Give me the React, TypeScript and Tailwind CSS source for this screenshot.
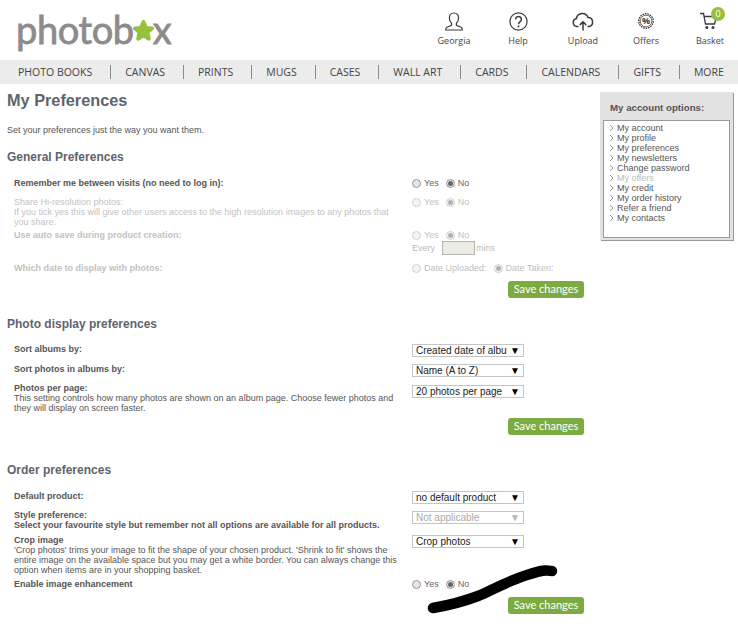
import type { ReactNode } from "react";

const navItems = ["PHOTO BOOKS", "CANVAS", "PRINTS", "MUGS", "CASES", "WALL ART", "CARDS", "CALENDARS", "GIFTS", "MORE"];
const accountLinks = ["My account", "My profile", "My preferences", "My newsletters", "Change password", "My offers", "My credit", "My order history", "Refer a friend", "My contacts"];

function Radio({ label, checked, muted }: { label: string; checked?: boolean; muted?: boolean }) {
  return (
    <span className={`flex items-center gap-[3px] ${muted ? "text-[#c0c0c0]" : "text-[#666666]"}`}>
      <span className={`flex h-[9px] w-[9px] items-center justify-center rounded-full border ${muted ? "border-[#d0d0d0] bg-[#f4f4f4]" : "border-[#999999] bg-[#e4e4e4]"}`}>
        {checked && <span className={`h-[5px] w-[5px] rounded-full ${muted ? "bg-[#b0b0b0]" : "bg-[#666666]"}`} />}
      </span>
      {label}
    </span>
  );
}

function Select({ value, disabled }: { value: string; disabled?: boolean }) {
  return (
    <div className={`flex h-[13px] w-[112px] items-center justify-between border border-[#c4c4c4] pl-[3px] pr-[3px] text-[10px] ${disabled ? "text-[#aaaaaa]" : "text-[#222222]"}`}>
      <span className="w-[91px] overflow-hidden whitespace-nowrap">{value}</span>
      <span className={`text-[10px] leading-none ${disabled ? "text-[#b5b5b5]" : "text-black"}`}>▼</span>
    </div>
  );
}

function Label({ children, muted }: { children: ReactNode; muted?: boolean }) {
  return <div className={`font-bold ${muted ? "text-[#c2c2c2]" : "text-[#555555]"}`}>{children}</div>;
}

function SaveButton({ className }: { className: string }) {
  return (
    <div className={`ml-[501px] flex h-[17px] w-[76px] items-center justify-center rounded-[3px] bg-[#7cab42] pb-px font-['Lato',sans-serif] text-[11px] text-white ${className}`}>
      Save changes
    </div>
  );
}

function Heading({ children, className }: { children: ReactNode; className: string }) {
  return <h2 className={`h-[14px] text-[12px] font-bold leading-[14px] text-[#5f646b] ${className}`}>{children}</h2>;
}

function HeaderLink({ label, className, children }: { label: string; className: string; children: ReactNode }) {
  return (
    <div className={`flex flex-col items-center ${className}`}>
      <div className="flex h-[20px] items-center text-[#3a3a3a]">{children}</div>
      <span className="mt-[4px] text-[9px] leading-[12px] text-[#444444]">{label}</span>
    </div>
  );
}

export default function App() {
  return (
    <div className="relative h-[627px] w-[738px] overflow-hidden bg-white font-['Liberation_Sans',Arial,sans-serif] text-[9px] leading-[10px]">
      <header className="flex h-[60px] font-['Open_Sans',sans-serif]">
        <div className="ml-[16px] mt-[4px] flex h-[50px] items-center font-['Lato',sans-serif] text-[38px] leading-none tracking-[-0.4px] text-[#8f8a8c] [-webkit-text-stroke:0.8px_#8f8a8c]">
          photob
          <svg viewBox="0 0 24 24" className="ml-[-2px] mr-[-2px] mt-[3px] h-[23px] w-[23px] shrink-0">
            <polygon points="12,3 14.6,9.2 21,9.8 16.2,14 17.6,20.6 12,17.2 6.4,20.6 7.8,14 3,9.8 9.4,9.2" fill="#96c03d" stroke="#96c03d" strokeWidth="4" strokeLinejoin="round" />
          </svg>
          x
        </div>
        <div className="ml-auto mt-[11px] flex">
          <HeaderLink label="Georgia" className="w-[64px]">
            <svg viewBox="0 0 18 19" className="h-[19px] w-[18px]" fill="none" stroke="currentColor" strokeWidth="1.2">
              <path d="M9 1C6 1 4.4 3.2 4.4 6c0 2.3 1 4.2 2.2 5.3v2.1L1.8 15.3C1 15.7.7 16.3.7 18h16.6c0-1.7-.3-2.3-1.1-2.7l-4.8-1.9v-2.1C12.6 10.2 13.6 8.3 13.6 6 13.6 3.2 12 1 9 1z" />
            </svg>
          </HeaderLink>
          <HeaderLink label="Help" className="w-[64px]">
            <svg viewBox="0 0 19 19" className="h-[19px] w-[19px]" fill="none" stroke="currentColor" strokeWidth="1.2">
              <circle cx="9.5" cy="9.5" r="8.6" />
              <path d="M6.6 7.4a2.9 2.9 0 1 1 4.6 2.3c-1.1.8-1.7 1.3-1.7 2.6" strokeWidth="1.5" />
              <circle cx="9.5" cy="14.6" r="1" fill="currentColor" stroke="none" />
            </svg>
          </HeaderLink>
          <HeaderLink label="Upload" className="w-[66px]">
            <svg viewBox="0 0 22 19" className="h-[19px] w-[22px]" fill="none" stroke="currentColor" strokeWidth="1.5" strokeLinecap="round" strokeLinejoin="round">
              <path d="M6 14.5H5a4 4 0 0 1-.6-7.9A6 6 0 0 1 16 5.6a4.5 4.5 0 0 1 1 8.9h-1" />
              <path d="M11 18v-8M8.2 12.6 11 9.8l2.8 2.8" />
            </svg>
          </HeaderLink>
          <HeaderLink label="Offers" className="w-[60px]">
            <svg viewBox="0 0 16 16" className="h-[16px] w-[16px]" fill="none" stroke="currentColor">
              <circle cx="8" cy="8" r="7.2" strokeWidth="1.4" strokeDasharray="1.6 0.9" />
              <circle cx="8" cy="8" r="5.8" strokeWidth="0.7" />
              <text x="8" y="11" textAnchor="middle" fontSize="9" fontWeight="700" fill="currentColor" stroke="none">%</text>
            </svg>
          </HeaderLink>
          <HeaderLink label="Basket" className="relative ml-[6px] w-[56px]">
            <svg viewBox="0 0 18 18" className="ml-[-2px] h-[18px] w-[18px]" fill="none" stroke="currentColor" strokeWidth="1.3">
              <path d="M0 1.5h3.5L5.5 12h9l2-7.5H4.2" />
              <circle cx="6.8" cy="15.5" r="1.5" fill="currentColor" stroke="none" />
              <circle cx="13" cy="15.5" r="1.5" fill="currentColor" stroke="none" />
            </svg>
            <span className="absolute left-[29px] top-[-4px] flex h-[14px] w-[14px] items-center justify-center rounded-full bg-[#96c03d] text-[9px] text-white">0</span>
          </HeaderLink>
        </div>
      </header>

      <nav className="flex h-[24px] items-center bg-[#ececec] pl-[18px] font-['Open_Sans',sans-serif] text-[10.5px] text-[#444444]">
        {navItems.map((item, i) => (
          <div key={item} className="flex items-center whitespace-nowrap">
            {i > 0 && <span className="ml-[18px] mr-[14px] h-[14px] w-px bg-[#8d8d85]" />}
            {item}
          </div>
        ))}
      </nav>

      <div className="flex">
        <main className="w-[590px] pl-[7px] text-[#555555]">
          <h1 className="mt-[6px] h-[20px] text-[16.3px] font-bold leading-[20px] text-[#5f646b]">My Preferences</h1>
          <p className="mt-[15px] h-[10px]">Set your preferences just the way you want them.</p>

          <Heading className="mt-[15px]">General Preferences</Heading>
          <div className="mt-[14px] flex h-[10px] pl-[7px]">
            <div className="w-[398px]"><Label>Remember me between visits (no need to log in):</Label></div>
            <div className="flex gap-[7px]"><Radio label="Yes" /><Radio label="No" checked /></div>
          </div>
          <div className="mt-[9px] flex h-[30px] pl-[7px] text-[#c2c2c2]">
            <div className="w-[398px] pr-[10px]">
              <div>Share Hi-resolution photos:</div>
              <div>If you tick yes this will give other users access to the high resolution images to any photos that you share.</div>
            </div>
            <div className="flex h-[10px] gap-[7px]"><Radio label="Yes" muted /><Radio label="No" checked muted /></div>
          </div>
          <div className="mt-[3px] flex h-[25px] pl-[7px]">
            <div className="w-[398px]"><Label muted>Use auto save during product creation:</Label></div>
            <div className="text-[#bbbbbb]">
              <div className="flex h-[10px] gap-[7px]"><Radio label="Yes" muted /><Radio label="No" checked muted /></div>
              <div className="mt-[1px] flex items-center">
                <span className="w-[30px]">Every</span>
                <span className="h-[14px] w-[33px] border border-[#b5b5b0] bg-[#ebebe4]" />
                <span className="ml-[1px]">mins</span>
              </div>
            </div>
          </div>
          <div className="mt-[8px] flex h-[10px] pl-[7px]">
            <div className="w-[398px]"><Label muted>Which date to display with photos:</Label></div>
            <div className="flex gap-[7px]"><Radio label="Date Uploaded:" muted /><Radio label="Date Taken:" checked muted /></div>
          </div>
          <SaveButton className="mt-[8px]" />

          <Heading className="mt-[19px]">Photo display preferences</Heading>
          <div className="mt-[13px] flex h-[13px] pl-[7px]">
            <div className="w-[398px]"><Label>Sort albums by:</Label></div>
            <Select value="Created date of album" />
          </div>
          <div className="mt-[7px] flex h-[13px] pl-[7px]">
            <div className="w-[398px]"><Label>Sort photos in albums by:</Label></div>
            <Select value="Name (A to Z)" />
          </div>
          <div className="mt-[6px] flex h-[30px] pl-[7px]">
            <div className="w-[398px] pr-[10px]">
              <Label>Photos per page:</Label>
              <div>This setting controls how many photos are shown on an album page. Choose fewer photos and they will display on screen faster.</div>
            </div>
            <div className="mt-[2px]"><Select value="20 photos per page" /></div>
          </div>
          <SaveButton className="mt-[5px]" />

          <Heading className="mt-[28px]">Order preferences</Heading>
          <div className="mt-[14px] flex h-[13px] pl-[7px]">
            <div className="w-[398px]"><Label>Default product:</Label></div>
            <Select value="no default product" />
          </div>
          <div className="mt-[6px] flex h-[20px] pl-[7px]">
            <div className="w-[398px]">
              <Label>Style preference:</Label>
              <Label>Select your favourite style but remember not all options are available for all products.</Label>
            </div>
            <div className="mt-[1px]"><Select value="Not applicable" disabled /></div>
          </div>
          <div className="mt-[5px] flex h-[40px] pl-[7px]">
            <div className="w-[398px] pr-[4px]">
              <Label>Crop image</Label>
              <div>'Crop photos' trims your image to fit the shape of your chosen product. 'Shrink to fit' shows the entire image on the available space but you may get a white border. You can always change this option when items are in your shopping basket.</div>
            </div>
            <Select value="Crop photos" />
          </div>
          <div className="mt-[4px] flex h-[10px] pl-[7px]">
            <div className="w-[398px]"><Label>Enable image enhancement</Label></div>
            <div className="flex gap-[7px]"><Radio label="Yes" /><Radio label="No" checked /></div>
          </div>
          <SaveButton className="mt-[8px]" />
        </main>

        <aside className="ml-[10px] mt-[8px] h-[148px] w-[133px] bg-[#e2e2e2] shadow-[1px_1px_0_#999999]">
          <div className="flex h-[28px] items-center pl-[10px] pt-[3px] text-[9.7px] font-bold text-[#555555]">My account options:</div>
          <ul className="mx-[3px] h-[118px] border border-[#999999] bg-white pl-[5px] pt-[2px]">
            {accountLinks.map((link) => (
              <li key={link} className={`flex h-[10px] items-center gap-[3px] ${link === "My offers" ? "text-[#bbbbbb]" : "text-[#555555]"}`}>
                <svg viewBox="0 0 5 8" className="h-[8px] w-[5px] shrink-0" fill="none" stroke="#999999" strokeWidth="1">
                  <path d="M1 1l3 3-3 3" />
                </svg>
                {link}
              </li>
            ))}
          </ul>
        </aside>
      </div>

      <svg className="absolute left-0 top-0 h-[627px] w-[738px]" viewBox="0 0 738 627" fill="none">
        <path d="M433 608C450 605 465 601 478 596S505 582 527 575 545 571 552 571" stroke="#000000" strokeWidth="10.5" strokeLinecap="round" />
      </svg>
    </div>
  );
}
